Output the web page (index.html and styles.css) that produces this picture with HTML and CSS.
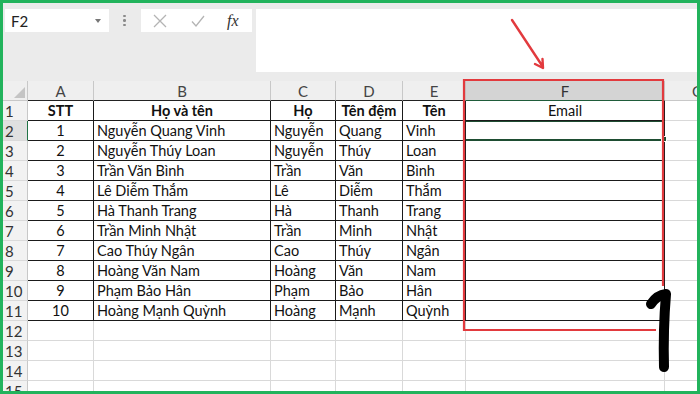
FILE: index.html
```html
<!DOCTYPE html>
<html lang="vi">
<head>
<meta charset="utf-8">
<title>Excel - Email</title>
<link rel="stylesheet" href="styles.css">
</head>
<body>
<div class="frame">
  <div class="toolbar">
    <div class="namebox"><span>F2</span><span class="caret"></span></div>
    <div class="dots"><i></i><i></i><i></i></div>
    <div class="fbtns">
      <svg class="ico" width="16" height="16" viewBox="0 0 16 16"><path d="M2 2 L14 14 M14 2 L2 14" stroke="#b4b4b4" stroke-width="1.3" fill="none"/></svg>
      <svg class="ico" width="16" height="16" viewBox="0 0 16 16"><path d="M2 8.5 L6 13 L14 3" stroke="#b4b4b4" stroke-width="1.3" fill="none"/></svg>
      <span class="fx">fx</span>
    </div>
    <div class="fbar"></div>
  </div>
  <div class="sheet">
    <div class="corner"><svg width="11" height="11" viewBox="0 0 11 11"><path d="M11 0 L11 11 L0 11 Z" fill="#c4c4c4"/></svg></div>
    <div class="ch">A</div><div class="ch">B</div><div class="ch">C</div><div class="ch">D</div><div class="ch">E</div><div class="ch act">F</div><div class="ch g">G</div>

    <div class="rh">1</div><div class="c t ctr b">STT</div><div class="c t ctr b">Họ và tên</div><div class="c t ctr b">Họ</div><div class="c t ctr b">Tên đệm</div><div class="c t ctr b">Tên</div><div class="c t ctr">Email</div><div class="c"></div>
    <div class="rh act">2</div><div class="c t ctr">1</div><div class="c t">Nguyễn Quang Vinh</div><div class="c t">Nguyễn</div><div class="c t">Quang</div><div class="c t">Vinh</div><div class="c t sel"></div><div class="c"></div>
    <div class="rh">3</div><div class="c t ctr">2</div><div class="c t">Nguyễn Thúy Loan</div><div class="c t">Nguyễn</div><div class="c t">Thúy</div><div class="c t">Loan</div><div class="c t"></div><div class="c"></div>
    <div class="rh">4</div><div class="c t ctr">3</div><div class="c t">Trần Văn Bình</div><div class="c t">Trần</div><div class="c t">Văn</div><div class="c t">Bình</div><div class="c t"></div><div class="c"></div>
    <div class="rh">5</div><div class="c t ctr">4</div><div class="c t">Lê Diễm Thắm</div><div class="c t">Lê</div><div class="c t">Diễm</div><div class="c t">Thắm</div><div class="c t"></div><div class="c"></div>
    <div class="rh">6</div><div class="c t ctr">5</div><div class="c t">Hà Thanh Trang</div><div class="c t">Hà</div><div class="c t">Thanh</div><div class="c t">Trang</div><div class="c t"></div><div class="c"></div>
    <div class="rh">7</div><div class="c t ctr">6</div><div class="c t">Trần Minh Nhật</div><div class="c t">Trần</div><div class="c t">Minh</div><div class="c t">Nhật</div><div class="c t"></div><div class="c"></div>
    <div class="rh">8</div><div class="c t ctr">7</div><div class="c t">Cao Thúy Ngân</div><div class="c t">Cao</div><div class="c t">Thúy</div><div class="c t">Ngân</div><div class="c t"></div><div class="c"></div>
    <div class="rh">9</div><div class="c t ctr">8</div><div class="c t">Hoàng Văn Nam</div><div class="c t">Hoàng</div><div class="c t">Văn</div><div class="c t">Nam</div><div class="c t"></div><div class="c"></div>
    <div class="rh">10</div><div class="c t ctr">9</div><div class="c t">Phạm Bảo Hân</div><div class="c t">Phạm</div><div class="c t">Bảo</div><div class="c t">Hân</div><div class="c t"></div><div class="c"></div>
    <div class="rh">11</div><div class="c t ctr">10</div><div class="c t">Hoàng Mạnh Quỳnh</div><div class="c t">Hoàng</div><div class="c t">Mạnh</div><div class="c t">Quỳnh</div><div class="c t"></div><div class="c"></div>
    <div class="rh">12</div><div class="c"></div><div class="c"></div><div class="c"></div><div class="c"></div><div class="c"></div><div class="c"></div><div class="c"></div>
    <div class="rh">13</div><div class="c"></div><div class="c"></div><div class="c"></div><div class="c"></div><div class="c"></div><div class="c"></div><div class="c"></div>
    <div class="rh">14</div><div class="c"></div><div class="c"></div><div class="c"></div><div class="c"></div><div class="c"></div><div class="c"></div><div class="c"></div>
    <div class="rh">15</div><div class="c"></div><div class="c"></div><div class="c"></div><div class="c"></div><div class="c"></div><div class="c"></div><div class="c"></div>
  </div>
  <svg class="annot" width="700" height="394" viewBox="0 0 700 394">
    <path d="M656 330 H464 V80 H663 V286" fill="none" stroke="#e23a3e" stroke-width="2.2"/>
    <path d="M512 20 L543 67 M535 64 L543 68 L542.5 59" fill="none" stroke="#e23a3e" stroke-width="2.4" stroke-linecap="round" stroke-linejoin="round"/>
    <path d="M651 304 Q657 295 666 294 Q663 330 664 367" fill="none" stroke="#000" stroke-width="10" stroke-linecap="round" stroke-linejoin="round"/>
  </svg>
</div>
</body>
</html>
```

FILE: styles.css
```css
body {
  margin: 0;
  background: #fff;
}

.frame {
  position: relative;
  width: 700px;
  height: 394px;
  box-sizing: border-box;
  border: 3px solid #22b35c;
  overflow: hidden;
  background: #fff;
  font-family: Lato, "Noto Sans", sans-serif;
  color: #111;
}

.toolbar {
  height: 78px;
  background: #ebebeb;
  display: flex;
  align-items: flex-start;
  padding-top: 6px;
  box-sizing: border-box;
}

.namebox {
  margin-left: 2px;
  width: 104px;
  height: 23px;
  background: #fff;
  display: flex;
  align-items: center;
  justify-content: space-between;
  padding: 0 8px 0 6px;
  box-sizing: border-box;
  font-size: 15px;
  color: #222;
}

.caret {
  width: 0;
  height: 0;
  border-left: 3.5px solid transparent;
  border-right: 3.5px solid transparent;
  border-top: 4px solid #777;
}

.dots {
  margin-left: 14px;
  width: 3px;
  height: 23px;
  display: flex;
  flex-direction: column;
  justify-content: center;
  gap: 2px;
}

.dots i {
  width: 2.5px;
  height: 2.5px;
  background: #8a8a8a;
  border-radius: 50%;
}

.fbtns {
  margin-left: 15px;
  width: 111px;
  height: 23px;
  background: #fff;
  display: flex;
  align-items: center;
  padding-left: 11px;
  box-sizing: border-box;
  gap: 22px;
}

.fx {
  font-family: "Liberation Serif", serif;
  font-style: italic;
  font-size: 16px;
  color: #333;
  margin-left: -1px;
}

.fbar {
  margin-left: 4px;
  flex: 1;
  height: 63px;
  background: #fff;
}

.sheet {
  display: grid;
  grid-template-columns: 25px 66px 177px 65px 67px 63px 199px 66px;
  grid-auto-rows: 20px;
  width: max-content;
  font-size: 14.5px;
}

.sheet > div {
  box-sizing: border-box;
  border-right: 1px solid #d9d9d9;
  border-bottom: 1px solid #d9d9d9;
  display: flex;
  align-items: center;
  white-space: nowrap;
  overflow: hidden;
}

.sheet > .corner {
  background: #efefef;
  justify-content: flex-end;
  align-items: flex-end;
  padding: 0 2px 2px 0;
  border-right-color: #c8c8c8;
  border-bottom-color: #c8c8c8;
}

.sheet > .ch {
  background: #efefef;
  justify-content: center;
  color: #444;
  font-size: 15px;
  border-right-color: #c8c8c8;
  border-bottom-color: #222;
}

.sheet > .ch.act {
  background: #d4d4d4;
  color: #333;
  border-bottom: 1px solid #1f5c3a;
}

.sheet > .ch.g {
  border-bottom-color: #c8c8c8;
}

.sheet > .rh {
  background: #f2f2f2;
  color: #333;
  font-size: 15px;
  padding-left: 2px;
  border-right-color: #c8c8c8;
  border-bottom-color: #dadada;
}

.sheet > .rh.act {
  background: #e0e0e0;
  border-right: 1px solid #217346;
}

.sheet > .c {
  padding-left: 3px;
}

.sheet > .t {
  border-right-color: #1a1a1a;
  border-bottom-color: #1a1a1a;
}

.sheet > .ctr {
  justify-content: center;
  padding-left: 0;
}

.sheet > .b {
  font-weight: 700;
}

.sheet > .sel {
  position: relative;
  overflow: visible;
  border-top: 1px solid #1e4d32;
  border-bottom: 2px solid #1e4d32;
}

.sheet > .sel::after {
  content: "";
  position: absolute;
  right: -3px;
  bottom: -3px;
  width: 4px;
  height: 4px;
  background: #1e4d32;
  border: 1px solid #fff;
}

.annot {
  position: absolute;
  left: -3px;
  top: -3px;
  pointer-events: none;
}
```
